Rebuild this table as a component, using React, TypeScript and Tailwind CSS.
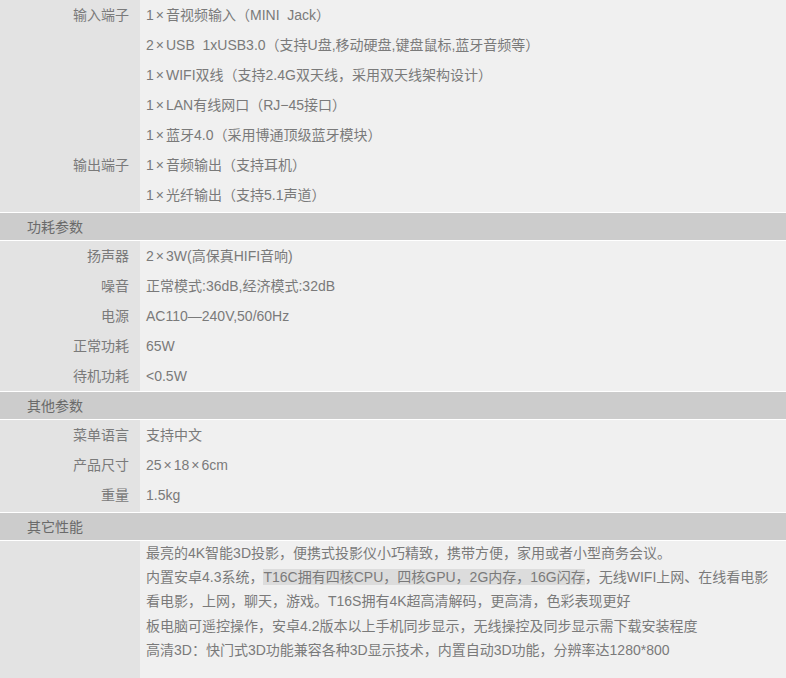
import type { ReactNode } from 'react';

interface Row {
  label?: string;
  value: ReactNode;
}

const font = 'font-["Liberation_Sans","Noto_Sans_CJK_SC",sans-serif]';

// the × in the original has a bit of air on both sides
const X = () => <span className="mx-[2px]">×</span>;

const ports: Row[] = [
  { label: '输入端子', value: <>1<X />音视频输入（MINI&nbsp;&nbsp;Jack）</> },
  { value: <>2<X />USB&nbsp;&nbsp;1xUSB3.0（支持U盘,移动硬盘,键盘鼠标,蓝牙音频等）</> },
  { value: <>1<X />WIFI双线（支持2.4G双天线，采用双天线架构设计）</> },
  { value: <>1<X />LAN有线网口（RJ−45接口）</> },
  { value: <>1<X />蓝牙4.0（采用博通顶级蓝牙模块）</> },
  { label: '输出端子', value: <>1<X />音频输出（支持耳机）</> },
  { value: <>1<X />光纤输出（支持5.1声道）</> },
];

const power: Row[] = [
  { label: '扬声器', value: <>2<X />3W(高保真HIFI音响)</> },
  { label: '噪音', value: '正常模式:36dB,经济模式:32dB' },
  { label: '电源', value: 'AC110—240V,50/60Hz' },
  { label: '正常功耗', value: '65W' },
  { label: '待机功耗', value: '<0.5W' },
];

const other: Row[] = [
  { label: '菜单语言', value: '支持中文' },
  { label: '产品尺寸', value: <>25<X />18<X />6cm</> },
  { label: '重量', value: '1.5kg' },
];

function Rows({ rows, tail }: { rows: Row[]; tail?: boolean }) {
  return (
    <div className="flex flex-col">
      {rows.map((r, i) => (
        <div key={i} className="flex h-[30px]">
          <div className="flex w-[140px] shrink-0 items-center justify-end bg-[#e3e3e3] pr-[11px]">
            {r.label}
          </div>
          <div className="flex flex-1 items-center whitespace-nowrap bg-[#f0f0f0] pl-[6px]">{r.value}</div>
        </div>
      ))}
      {tail && (
        <div className="flex h-[2px]">
          <div className="w-[140px] shrink-0 bg-[#e3e3e3]" />
          <div className="flex-1 bg-[#f0f0f0]" />
        </div>
      )}
    </div>
  );
}

function SectionHeader({ title }: { title: string }) {
  return (
    <div className="flex h-[29px] items-center border-y border-white bg-[#cccccc] pl-[27px] pt-[2px] text-[#6a6a6a]">
      {title}
    </div>
  );
}

export default function App() {
  return (
    <div className={`h-[678px] w-[786px] overflow-hidden bg-[#f0f0f0] text-[14px] text-[#7a7a7a] ${font}`}>
      <Rows rows={ports} tail />
      <SectionHeader title="功耗参数" />
      <Rows rows={power} />
      <SectionHeader title="其他参数" />
      <Rows rows={other} tail />
      <SectionHeader title="其它性能" />
      <div className="flex h-[140px]">
        <div className="w-[140px] shrink-0 bg-[#e3e3e3]" />
        <div className="flex-1 whitespace-nowrap bg-[#f0f0f0] pl-[6px] leading-[24.2px]">
          <div>最亮的4K智能3D投影，便携式投影仪小巧精致，携带方便，家用或者小型商务会议。</div>
          <div>
            内置安卓4.3系统，
            <span className="bg-[#dcdcdc]">T16C拥有四核CPU，四核GPU，2G内存，16G闪存</span>
            ，无线WIFI上网、在线看电影
          </div>
          <div>看电影，上网，聊天，游戏。T16S拥有4K超高清解码，更高清，色彩表现更好</div>
          <div>板电脑可遥控操作，安卓4.2版本以上手机同步显示，无线操控及同步显示需下载安装程度</div>
          <div>高清3D：快门式3D功能兼容各种3D显示技术，内置自动3D功能，分辨率达1280*800</div>
        </div>
      </div>
    </div>
  );
}
